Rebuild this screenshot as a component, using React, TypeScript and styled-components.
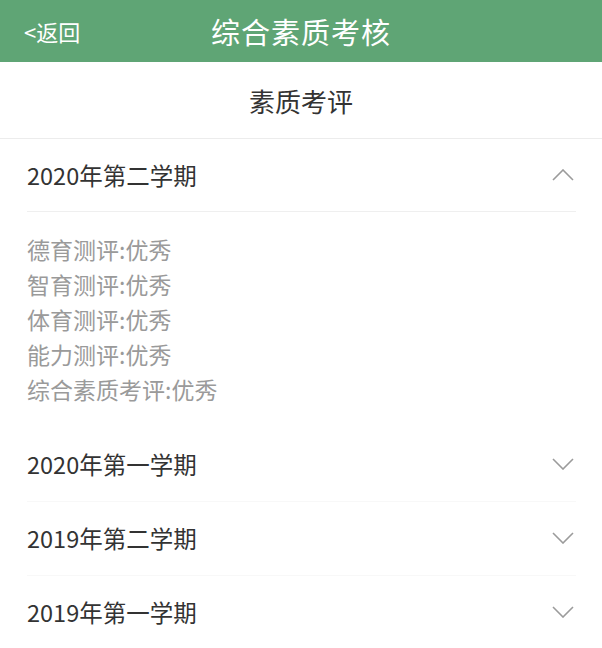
import { ReactElement } from "react";
import styled, { createGlobalStyle } from "styled-components";

const GlobalStyle = createGlobalStyle`
  body {
    margin: 0;
    background: #ffffff;
    font-family: "Noto Sans CJK SC", "Noto Sans", sans-serif;
  }
`;

const Page = styled.div`
  width: 602px;
  min-height: 648px;
  background: #ffffff;
`;

const NavBar = styled.div`
  height: 62px;
  background: #5fa575;
  display: grid;
  grid-template-columns: 1fr auto 1fr;
  align-items: center;
  color: #ffffff;
`;

const BackLink = styled.span`
  font-size: 22px;
  padding-left: 24px;
  justify-self: start;
`;

const NavTitle = styled.span`
  font-size: 29px;
  letter-spacing: 1px;
`;

const SubTitle = styled.div`
  height: 76px;
  display: flex;
  align-items: center;
  justify-content: center;
  font-size: 26px;
  color: #333333;
  border-bottom: 1px solid #ececec;
`;

const List = styled.div`
  padding: 0 26px 0 27px;
`;

const Term = styled.div<{ $open?: boolean }>`
  border-bottom: 1px solid ${(p) => (p.$open ? "transparent" : "#f8f8f8")};
`;

const TermHead = styled.div<{ $open?: boolean }>`
  height: 73px;
  box-sizing: border-box;
  padding-bottom: 1px;
  display: flex;
  align-items: center;
  justify-content: space-between;
  font-size: 23.5px;
  color: #333333;
  border-bottom: 1px solid ${(p) => (p.$open ? "#efefef" : "transparent")};
`;

const TermBody = styled.div`
  padding: 20px 0 20px;
  display: flex;
  flex-direction: column;
`;

const Score = styled.div`
  font-size: 23px;
  line-height: 35px;
  color: #9a9a9a;
`;

const Chevron = styled.svg`
  width: 22px;
  height: 12px;
  margin-right: 2px;
  flex: none;
`;

function Arrow({ up }: { up: boolean }): ReactElement {
  return (
    <Chevron viewBox="0 0 22 12">
      <polyline
        points={up ? "1,11 11,1 21,11" : "1,1 11,11 21,1"}
        fill="none"
        stroke="#9b9b9b"
        strokeWidth="1.6"
      />
    </Chevron>
  );
}

const terms = [
  {
    name: "2020年第二学期",
    open: true,
    scores: [
      "德育测评:优秀",
      "智育测评:优秀",
      "体育测评:优秀",
      "能力测评:优秀",
      "综合素质考评:优秀",
    ],
  },
  { name: "2020年第一学期", open: false, scores: [] },
  { name: "2019年第二学期", open: false, scores: [] },
  { name: "2019年第一学期", open: false, scores: [] },
];

export default function App(): ReactElement {
  return (
    <Page>
      <GlobalStyle />
      <NavBar>
        <BackLink>&lt;返回</BackLink>
        <NavTitle>综合素质考核</NavTitle>
        <span />
      </NavBar>
      <SubTitle>素质考评</SubTitle>
      <List>
        {terms.map((t) => (
          <Term key={t.name} $open={t.open}>
            <TermHead $open={t.open}>
              <span>{t.name}</span>
              <Arrow up={t.open} />
            </TermHead>
            {t.open && (
              <TermBody>
                {t.scores.map((s) => (
                  <Score key={s}>{s}</Score>
                ))}
              </TermBody>
            )}
          </Term>
        ))}
      </List>
    </Page>
  );
}
